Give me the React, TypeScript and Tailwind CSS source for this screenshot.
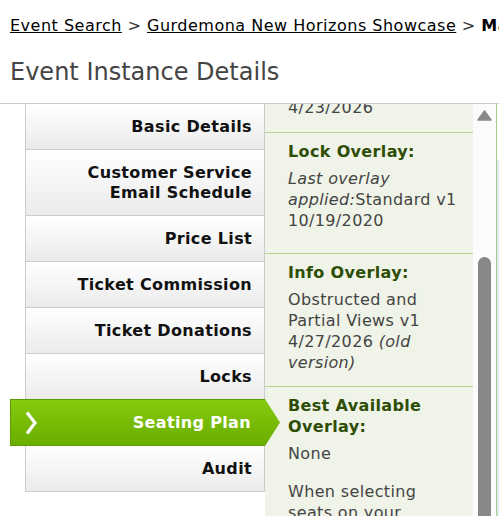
import React from "react";

const NAV_ITEMS: { label: string[]; active?: boolean }[] = [
  { label: ["Basic Details"] },
  { label: ["Customer Service", "Email Schedule"] },
  { label: ["Price List"] },
  { label: ["Ticket Commission"] },
  { label: ["Ticket Donations"] },
  { label: ["Locks"] },
  { label: ["Seating Plan"], active: true },
  { label: ["Audit"] },
];

function NavItem({ label, active }: { label: string[]; active?: boolean }) {
  if (active) {
    return (
      <li className="relative z-10 -mt-px -ml-[16px] flex h-[47px] w-[270px] items-center border-y border-l border-[#5b9a0a] bg-linear-to-b from-[#86ca0e] to-[#6aae00] pr-[29px] pl-[14px] [clip-path:polygon(0_0,calc(100%-15px)_0,100%_50%,calc(100%-15px)_100%,0_100%)]">
        <svg width="12" height="24" viewBox="0 0 12 24" className="shrink-0">
          <polyline
            points="2,1.5 10,12 2,22.5"
            fill="none"
            stroke="#fff"
            strokeWidth="3.2"
            strokeLinejoin="miter"
          />
        </svg>
        <span className="ml-auto text-right font-bold leading-[20px] text-white">
          {label[0]}
        </span>
      </li>
    );
  }
  return (
    <li className="border-b border-[#cccccc] bg-linear-to-b from-white to-[#ebebeb] pt-[13px] pr-[12px] pb-[12px] text-right font-bold leading-[20px] text-[#111]">
      {label.map((l) => (
        <div key={l}>{l}</div>
      ))}
    </li>
  );
}

export default function App() {
  return (
    <div className="h-[516px] w-[499px] overflow-hidden bg-white font-['DejaVu_Sans',sans-serif] text-[16px] tracking-[0.35px]">
      <div className="overflow-hidden pt-[16px] pl-[10px] leading-[20px] tracking-[0.5px] whitespace-nowrap text-[#333]">
        <a className="text-black underline">Event Search</a> &gt;{" "}
        <a className="text-black underline">Gurdemona New Horizons Showcase</a> &gt;{" "}
        <b className="text-black">Manage Seating Plan</b>
      </div>

      <h1 className="mt-[22px] pl-[10px] text-[24px] leading-[29px] tracking-normal text-[#444]">
        Event Instance Details
      </h1>

      <div className="mt-[16px] flex h-[420px] border-t border-[#cccccc] pl-[25px]">
        <ul className="w-[240px] shrink-0 self-start border-x border-[#cccccc]">
          {NAV_ITEMS.map((item) => (
            <NavItem key={item.label.join(" ")} {...item} />
          ))}
        </ul>

        <div className="w-[208px] shrink-0 overflow-hidden bg-[#eff3e8] leading-[21px] text-[#444]">
          <div className="-mt-[7px]">
            <section className="border-b border-[#b9d095] pr-[11px] pb-[14px] pl-[23px]">
              4/23/2026
            </section>

            <section className="border-b border-[#b9d095] pt-[8px] pr-[11px] pb-[22px] pl-[23px]">
              <h3 className="mb-[6px] font-bold text-[#2e4d05]">Lock Overlay:</h3>
              <p>
                <i>Last overlay applied:</i>Standard v1 10/19/2020
              </p>
            </section>

            <section className="border-b border-[#b9d095] pt-[8px] pr-[11px] pb-[13px] pl-[23px]">
              <h3 className="mb-[6px] font-bold text-[#2e4d05]">Info Overlay:</h3>
              <p>
                Obstructed and Partial Views v1 4/27/2026 <i>(old version)</i>
              </p>
            </section>

            <section className="pt-[8px] pr-[11px] pl-[23px]">
              <h3 className="mb-[6px] font-bold text-[#2e4d05]">Best Available Overlay:</h3>
              <p>None</p>
              <p className="mt-[17px]">
                When selecting seats on your website, customers will be offered the best available seats first.
              </p>
            </section>
          </div>
        </div>

        <div className="flex w-[23px] shrink-0 flex-col bg-[#fbfbfb]">
          <svg width="15" height="11" viewBox="0 0 15 11" className="mt-[6px] ml-[4px]">
            <path d="M7.5 1 L14 10 L1 10 Z" fill="#888" stroke="#888" strokeWidth="1.5" strokeLinejoin="round" />
          </svg>
          <div className="mt-[136px] ml-[5px] w-[13px] flex-1 rounded-t-full bg-[#888888]" />
        </div>

        <div className="w-px shrink-0 bg-[#a9c98a]" />
        <div className="flex-1">
          <div className="mt-[56px] h-full bg-[#dfe9f1]" />
        </div>
      </div>
    </div>
  );
}
